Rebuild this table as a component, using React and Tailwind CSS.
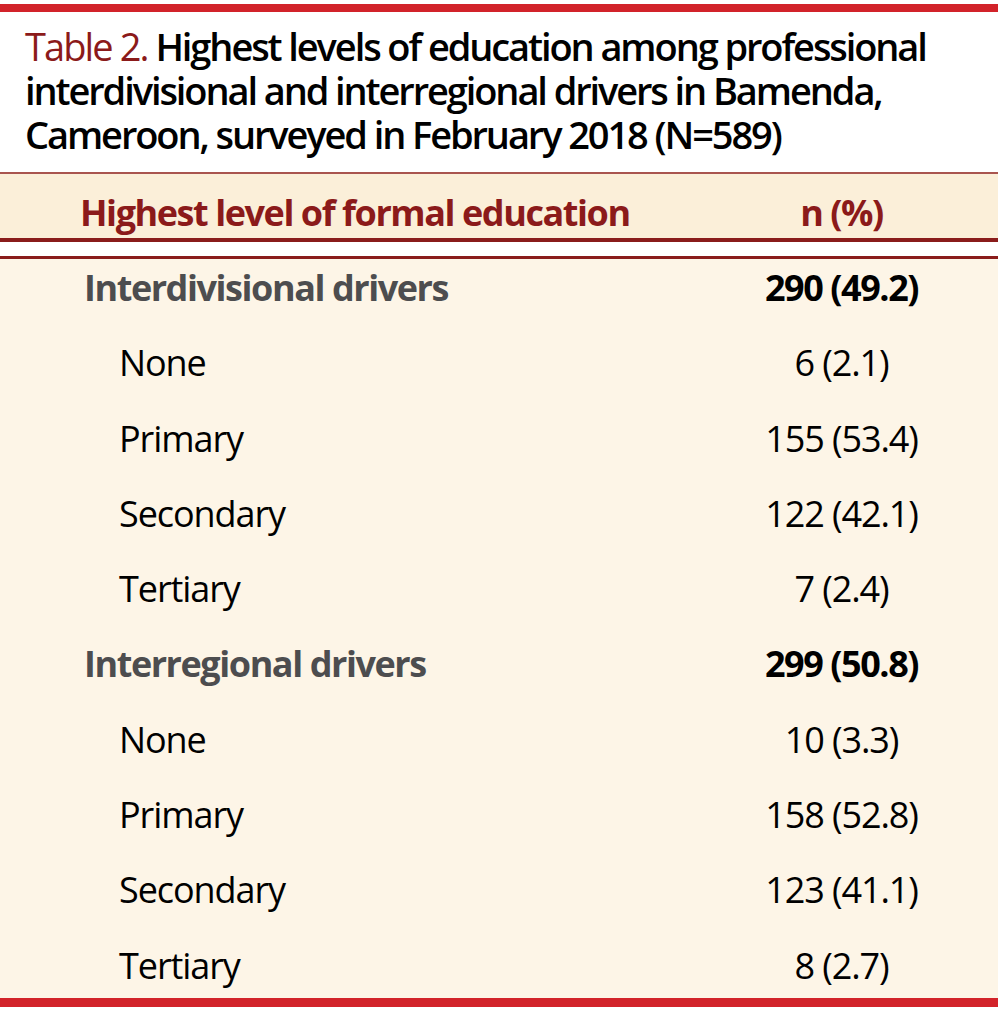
import React from 'react'

const groups = [
  {
    label: 'Interdivisional drivers',
    total: '290 (49.2)',
    rows: [
      ['None', '6 (2.1)'],
      ['Primary', '155 (53.4)'],
      ['Secondary', '122 (42.1)'],
      ['Tertiary', '7 (2.4)'],
    ],
  },
  {
    label: 'Interregional drivers',
    total: '299 (50.8)',
    rows: [
      ['None', '10 (3.3)'],
      ['Primary', '158 (52.8)'],
      ['Secondary', '123 (41.1)'],
      ['Tertiary', '8 (2.7)'],
    ],
  },
]

export default function App() {
  return (
    <div className="w-[998px] h-[1020px] bg-white pt-[4px] font-['Open_Sans',sans-serif] text-[36px] tracking-[-0.03em] text-black">
      <div className="h-[8px] bg-[#d2232a]" />

      <p className="px-[25px] pt-[12px] text-[38px] font-semibold tracking-[-0.055em] leading-[44px] whitespace-nowrap text-black">
        <span className="font-normal tracking-[-0.05em] text-[#8b1a1a]">Table 2.</span> Highest levels of education among professional
        <br />
        interdivisional and interregional drivers in Bamenda,
        <br />
        Cameroon, surveyed in February 2018 (N=589)
      </p>

      <div className="mt-[16px] grid grid-cols-[685px_1fr] h-[70px] pt-[21px] bg-[#fbefd9] border-t-2 border-t-[#a9554f] border-b-[4px] border-b-[#8a1c1b] font-bold tracking-[-0.04em] text-[#8b1a1a] leading-none">
        <div className="pl-[80px]">Highest level of formal education</div>
        <div className="text-center">n (%)</div>
      </div>

      <div className="mt-[14px] border-t-[3px] border-[#8a1c1b] bg-[#fdf5e7] h-[742px] pt-[11px] leading-none">
        {groups.map(g => (
          <div key={g.label}>
            <div className="grid grid-cols-[685px_1fr] h-[75.3px] font-bold tracking-[-0.04em]">
              <div className="pl-[84px] text-[#4d4d4f]">{g.label}</div>
              <div className="text-center">{g.total}</div>
            </div>
            {g.rows.map(([name, value]) => (
              <div key={name} className="grid grid-cols-[685px_1fr] h-[75.3px]">
                <div className="pl-[119px]">{name}</div>
                <div className="text-center">{value}</div>
              </div>
            ))}
          </div>
        ))}
      </div>

      <div className="h-[9px] bg-[#d2232a]" />
    </div>
  )
}
